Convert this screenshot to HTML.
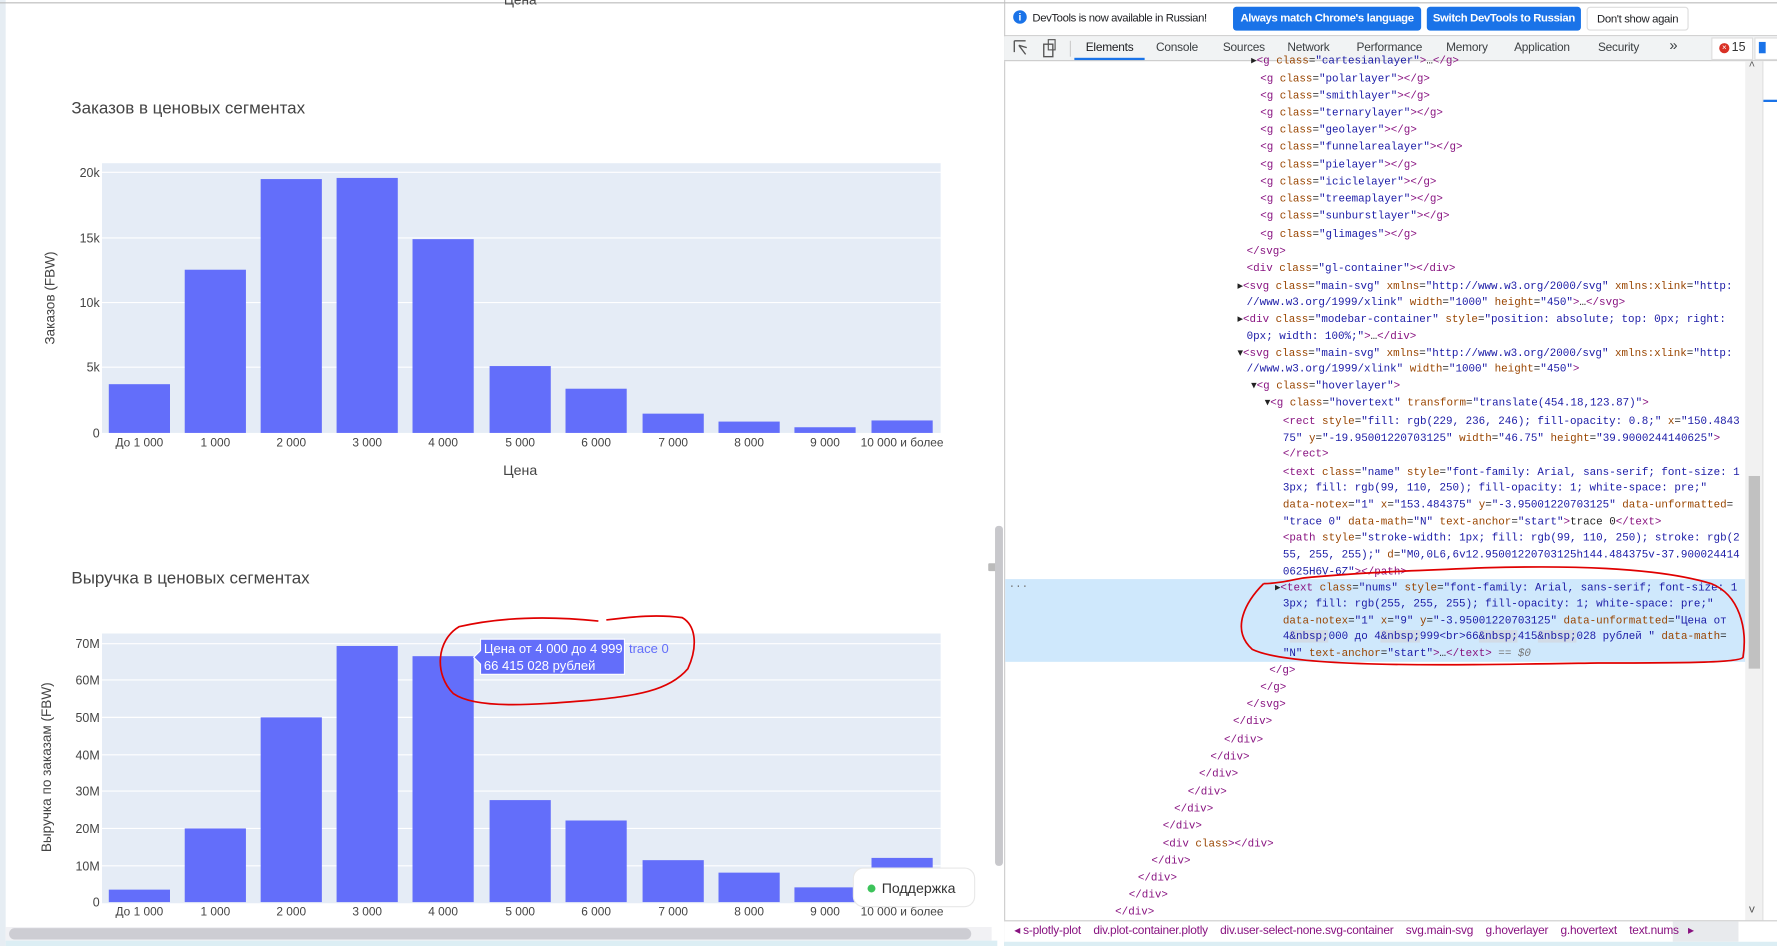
<!DOCTYPE html>
<html><head><meta charset="utf-8"><style>
html,body{margin:0;padding:0;width:1777px;height:946px;overflow:hidden;background:#fff}
#w{position:absolute;left:0;top:0;width:1568px;height:835px;transform:scale(1.13329);transform-origin:0 0;font-family:"Liberation Sans","Noto Sans CJK JP",sans-serif}
.ab{position:absolute}
.code{position:absolute;font-family:"Liberation Mono",monospace;font-size:9.6px;white-space:pre;line-height:12px;color:#222}
.t{color:#881280}.a{color:#994500}.v{color:#1a1aa6}
.tab{position:absolute;top:36px;font-size:10.5px;color:#3c4043;white-space:nowrap;letter-spacing:-0.2px}
.btn{position:absolute;top:6px;height:21px;line-height:21px;font-size:10px;border-radius:3px;white-space:nowrap;overflow:hidden;text-align:center;letter-spacing:-0.3px;box-sizing:border-box}
.hl{background:#d2dbe6}
</style></head><body><div id="w">
<div class="ab" style="left:0;top:0;width:5px;height:835px;background:#e6edf3"></div>
<div class="ab" style="left:0;top:2px;width:886px;height:1px;background:#bbb"></div>
<svg class="ab" style="left:0;top:0" width="886" height="835" font-family="Liberation Sans, Noto Sans CJK JP, sans-serif">
<text x="459" y="4" font-size="12" fill="#444" text-anchor="middle">Цена</text>
<text x="63" y="100" font-size="15" fill="#444">Заказов в ценовых сегментах</text>
<rect x="90" y="144" width="740" height="238" fill="#e5ecf6"/>
<g stroke="#fff" stroke-width="1"><line x1="90" x2="830" y1="152" y2="152"/><line x1="90" x2="830" y1="210" y2="210"/><line x1="90" x2="830" y1="267" y2="267"/><line x1="90" x2="830" y1="324" y2="324"/></g>
<g fill="#636efa">
<rect x="96" y="339" width="54" height="43"/><rect x="163" y="238" width="54" height="144"/><rect x="230" y="158" width="54" height="224"/><rect x="297" y="157" width="54" height="225"/><rect x="364" y="211" width="54" height="171"/><rect x="432" y="323" width="54" height="59"/><rect x="499" y="343" width="54" height="39"/><rect x="567" y="365" width="54" height="17"/><rect x="634" y="372" width="54" height="10"/><rect x="701" y="377" width="54" height="5"/><rect x="769" y="371" width="54" height="11"/></g>
<g font-size="11" fill="#444" text-anchor="end"><text x="88" y="156">20k</text><text x="88" y="214">15k</text><text x="88" y="271">10k</text><text x="88" y="328">5k</text><text x="88" y="386">0</text></g>
<g font-size="10.5" fill="#444" text-anchor="middle"><text x="123" y="394">До 1 000</text><text x="190" y="394">1 000</text><text x="257" y="394">2 000</text><text x="324" y="394">3 000</text><text x="391" y="394">4 000</text><text x="459" y="394">5 000</text><text x="526" y="394">6 000</text><text x="594" y="394">7 000</text><text x="661" y="394">8 000</text><text x="728" y="394">9 000</text><text x="796" y="394">10 000 и более</text></g>
<text x="459" y="419" font-size="12.5" fill="#444" text-anchor="middle">Цена</text>
<text transform="translate(48,263) rotate(-90)" font-size="12" fill="#444" text-anchor="middle">Заказов (FBW)</text>
<text x="63" y="515" font-size="15" fill="#444">Выручка в ценовых сегментах</text>
<rect x="90" y="559" width="740" height="238" fill="#e5ecf6"/>
<g stroke="#fff" stroke-width="1"><line x1="90" x2="830" y1="568" y2="568"/><line x1="90" x2="830" y1="600" y2="600"/><line x1="90" x2="830" y1="633" y2="633"/><line x1="90" x2="830" y1="666" y2="666"/><line x1="90" x2="830" y1="698" y2="698"/><line x1="90" x2="830" y1="731" y2="731"/><line x1="90" x2="830" y1="764" y2="764"/></g>
<g fill="#636efa">
<rect x="96" y="785" width="54" height="11"/><rect x="163" y="731" width="54" height="65"/><rect x="230" y="633" width="54" height="163"/><rect x="297" y="570" width="54" height="226"/><rect x="364" y="579" width="54" height="217"/><rect x="432" y="706" width="54" height="90"/><rect x="499" y="724" width="54" height="72"/><rect x="567" y="759" width="54" height="37"/><rect x="634" y="770" width="54" height="26"/><rect x="701" y="783" width="54" height="13"/><rect x="769" y="757" width="54" height="39"/></g>
<g font-size="11" fill="#444" text-anchor="end"><text x="88" y="572">70M</text><text x="88" y="604">60M</text><text x="88" y="637">50M</text><text x="88" y="670">40M</text><text x="88" y="702">30M</text><text x="88" y="735">20M</text><text x="88" y="768">10M</text><text x="88" y="800">0</text></g>
<g font-size="10.5" fill="#444" text-anchor="middle"><text x="123" y="808">До 1 000</text><text x="190" y="808">1 000</text><text x="257" y="808">2 000</text><text x="324" y="808">3 000</text><text x="391" y="808">4 000</text><text x="459" y="808">5 000</text><text x="526" y="808">6 000</text><text x="594" y="808">7 000</text><text x="661" y="808">8 000</text><text x="728" y="808">9 000</text><text x="796" y="808">10 000 и более</text></g>
<text transform="translate(45,677) rotate(-90)" font-size="12" fill="#444" text-anchor="middle">Выручка по заказам (FBW)</text>
<path d="M418,580 L424,574 V564 H551 V595 H424 V586 Z" fill="#636efa" stroke="#fff" stroke-width="1"/>
<text x="427" y="576" font-size="11.5" fill="#fff">Цена от 4 000 до 4 999</text>
<text x="427" y="591" font-size="11.5" fill="#fff">66 415 028 рублей</text>
<text x="555" y="576" font-size="11.5" fill="#636efa">trace 0</text>
<path d="M528,548 C480,543 440,545 405,553 C385,565 383,595 400,612 C420,626 470,622 520,618 C560,614 590,610 607,590 C616,570 614,552 602,545 C580,542 560,544 535,547" fill="none" stroke="#e00000" stroke-width="1.5"/>
<rect x="872" y="497" width="9" height="7" rx="1" fill="#bbb"/>
<rect x="878" y="464" width="7" height="300" rx="3" fill="#c8c8cc"/>
<rect x="5" y="818" width="870" height="12" fill="#f1f1f4"/>
<rect x="8" y="819" width="849" height="10" rx="5" fill="#cdcdd3"/>
<rect x="5" y="830" width="875" height="5" fill="#dceef4"/>
<rect x="753" y="766" width="107" height="34" rx="9" fill="#fff" stroke="#e8e8e8"/>
<circle cx="769" cy="784" r="3.5" fill="#3cc35a"/>
<text x="778" y="788" font-size="12.5" fill="#333">Поддержка</text>
</svg>

<div class="ab" style="left:886px;top:0;width:682px;height:835px;background:#fff;border-left:1px solid #ccc"></div>
<div class="ab" style="left:886px;top:2px;width:682px;height:1px;background:#bbb"></div>
<div class="ab" style="left:886px;top:31px;width:682px;height:1px;background:#ccc"></div>
<div class="ab" style="left:886px;top:32px;width:682px;height:21px;background:#f1f3f4;border-bottom:1px solid #ccc"></div>
<div class="ab" style="left:894px;top:9px;width:12px;height:12px;border-radius:6px;background:#1a73e8;color:#fff;font-size:9px;text-align:center;line-height:12px;font-weight:bold">i</div>
<div class="ab" style="left:911px;top:11px;font-size:10px;color:#202124;white-space:nowrap;letter-spacing:-0.35px">DevTools is now available in Russian!</div>
<div class="btn" style="left:1088px;width:166px;background:#1a73e8;color:#fff;font-weight:bold">Always match Chrome's language</div>
<div class="btn" style="left:1259px;width:136px;background:#1a73e8;color:#fff;font-weight:bold">Switch DevTools to Russian</div>
<div class="btn" style="left:1400px;width:90px;background:#fff;color:#202124;border:1px solid #ddd">Don't show again</div>
<svg class="ab" style="left:893px;top:34px" width="45" height="18"><path d="M2,2 H12 M2,2 V12 M6,6 L12,14 M6,6 L13,8" stroke="#555" fill="none" stroke-width="1.2"/><rect x="28" y="5" width="8" height="11" fill="none" stroke="#555" stroke-width="1.2"/><rect x="32" y="1" width="6" height="9" fill="none" stroke="#555"/></svg>
<div class="ab" style="left:944px;top:36px;width:1px;height:14px;background:#ccc"></div>
<div class="tab" style="left:958px;color:#202124">Elements</div>
<div class="ab" style="left:948px;top:51px;width:62px;height:2px;background:#1a73e8"></div>
<div class="tab" style="left:1020px">Console</div>
<div class="tab" style="left:1079px">Sources</div>
<div class="tab" style="left:1136px">Network</div>
<div class="tab" style="left:1197px">Performance</div>
<div class="tab" style="left:1276px">Memory</div>
<div class="tab" style="left:1336px">Application</div>
<div class="tab" style="left:1410px">Security</div>
<div class="tab" style="left:1473px;font-size:13px;top:32px">»</div>
<div class="ab" style="left:1510px;top:33px;width:35px;height:18px;border:1px solid #ddd;background:#fff"></div>
<div class="ab" style="left:1517px;top:38px;width:9px;height:9px;border-radius:5px;background:#d93025;color:#fff;font-size:7px;text-align:center;line-height:9px">×</div>
<div class="ab" style="left:1528px;top:36px;font-size:11px;color:#333">15</div>
<div class="ab" style="left:1548px;top:33px;width:20px;height:18px;border:1px solid #ddd;background:#fff"></div>
<div class="ab" style="left:1552px;top:37px;width:6px;height:10px;background:#1a73e8"></div>
<div class="ab" style="left:887px;top:511px;width:653px;height:73px;background:#cfe8fc"></div>
<div class="code" style="left:890px;top:512px;color:#777">···</div>
<div class="ab" style="left:1540px;top:54px;width:15px;height:759px;background:#f1f1f1"></div>
<div class="ab" style="left:1543px;top:420px;width:10px;height:170px;background:#c1c1c1"></div>
<div class="code" style="left:1543px;top:53px;color:#555">^</div>
<div class="code" style="left:1543px;top:797px;color:#555">v</div>
<div class="ab" style="left:1555px;top:54px;width:13px;height:759px;background:#fff;border-left:1px solid #ddd"></div>
<div class="ab" style="left:1556px;top:88px;width:12px;height:2px;background:#1a73e8"></div>

<div class="code" style="left:1104px;top:48px">▸<span class="t">&lt;g</span> <span class="a">class</span>=<span class="v">"cartesianlayer"</span><span class="t">&gt;</span>…<span class="t">&lt;/g&gt;</span></div>
<div class="code" style="left:1112px;top:64px"><span class="t">&lt;g</span> <span class="a">class</span>=<span class="v">"polarlayer"</span><span class="t">&gt;&lt;/g&gt;</span></div>
<div class="code" style="left:1112px;top:79px"><span class="t">&lt;g</span> <span class="a">class</span>=<span class="v">"smithlayer"</span><span class="t">&gt;&lt;/g&gt;</span></div>
<div class="code" style="left:1112px;top:94px"><span class="t">&lt;g</span> <span class="a">class</span>=<span class="v">"ternarylayer"</span><span class="t">&gt;&lt;/g&gt;</span></div>
<div class="code" style="left:1112px;top:109px"><span class="t">&lt;g</span> <span class="a">class</span>=<span class="v">"geolayer"</span><span class="t">&gt;&lt;/g&gt;</span></div>
<div class="code" style="left:1112px;top:124px"><span class="t">&lt;g</span> <span class="a">class</span>=<span class="v">"funnelarealayer"</span><span class="t">&gt;&lt;/g&gt;</span></div>
<div class="code" style="left:1112px;top:140px"><span class="t">&lt;g</span> <span class="a">class</span>=<span class="v">"pielayer"</span><span class="t">&gt;&lt;/g&gt;</span></div>
<div class="code" style="left:1112px;top:155px"><span class="t">&lt;g</span> <span class="a">class</span>=<span class="v">"iciclelayer"</span><span class="t">&gt;&lt;/g&gt;</span></div>
<div class="code" style="left:1112px;top:170px"><span class="t">&lt;g</span> <span class="a">class</span>=<span class="v">"treemaplayer"</span><span class="t">&gt;&lt;/g&gt;</span></div>
<div class="code" style="left:1112px;top:185px"><span class="t">&lt;g</span> <span class="a">class</span>=<span class="v">"sunburstlayer"</span><span class="t">&gt;&lt;/g&gt;</span></div>
<div class="code" style="left:1112px;top:201px"><span class="t">&lt;g</span> <span class="a">class</span>=<span class="v">"glimages"</span><span class="t">&gt;&lt;/g&gt;</span></div>
<div class="code" style="left:1100px;top:216px"><span class="t">&lt;/svg&gt;</span></div>
<div class="code" style="left:1100px;top:231px"><span class="t">&lt;div</span> <span class="a">class</span>=<span class="v">"gl-container"</span><span class="t">&gt;&lt;/div&gt;</span></div>
<div class="code" style="left:1092px;top:247px">▸<span class="t">&lt;svg</span> <span class="a">class</span>=<span class="v">"main-svg"</span> <span class="a">xmlns</span>=<span class="v">"http://www.w3.org/2000/svg"</span> <span class="a">xmlns:xlink</span>=<span class="v">"http:</span></div>
<div class="code" style="left:1100px;top:261px"><span class="v">//www.w3.org/1999/xlink"</span> <span class="a">width</span>=<span class="v">"1000"</span> <span class="a">height</span>=<span class="v">"450"</span><span class="t">&gt;</span>…<span class="t">&lt;/svg&gt;</span></div>
<div class="code" style="left:1092px;top:276px">▸<span class="t">&lt;div</span> <span class="a">class</span>=<span class="v">"modebar-container"</span> <span class="a">style</span>=<span class="v">"position: absolute; top: 0px; right:</span></div>
<div class="code" style="left:1100px;top:291px"><span class="v">0px; width: 100%;"</span><span class="t">&gt;</span>…<span class="t">&lt;/div&gt;</span></div>
<div class="code" style="left:1092px;top:306px">▾<span class="t">&lt;svg</span> <span class="a">class</span>=<span class="v">"main-svg"</span> <span class="a">xmlns</span>=<span class="v">"http://www.w3.org/2000/svg"</span> <span class="a">xmlns:xlink</span>=<span class="v">"http:</span></div>
<div class="code" style="left:1100px;top:320px"><span class="v">//www.w3.org/1999/xlink"</span> <span class="a">width</span>=<span class="v">"1000"</span> <span class="a">height</span>=<span class="v">"450"</span><span class="t">&gt;</span></div>
<div class="code" style="left:1104px;top:335px">▾<span class="t">&lt;g</span> <span class="a">class</span>=<span class="v">"hoverlayer"</span><span class="t">&gt;</span></div>
<div class="code" style="left:1116px;top:350px">▾<span class="t">&lt;g</span> <span class="a">class</span>=<span class="v">"hovertext"</span> <span class="a">transform</span>=<span class="v">"translate(454.18,123.87)"</span><span class="t">&gt;</span></div>
<div class="code" style="left:1132px;top:366px"><span class="t">&lt;rect</span> <span class="a">style</span>=<span class="v">"fill: rgb(229, 236, 246); fill-opacity: 0.8;"</span> <span class="a">x</span>=<span class="v">"150.4843</span></div>
<div class="code" style="left:1132px;top:381px"><span class="v">75"</span> <span class="a">y</span>=<span class="v">"-19.95001220703125"</span> <span class="a">width</span>=<span class="v">"46.75"</span> <span class="a">height</span>=<span class="v">"39.9000244140625"</span><span class="t">&gt;</span></div>
<div class="code" style="left:1132px;top:395px"><span class="t">&lt;/rect&gt;</span></div>
<div class="code" style="left:1132px;top:411px"><span class="t">&lt;text</span> <span class="a">class</span>=<span class="v">"name"</span> <span class="a">style</span>=<span class="v">"font-family: Arial, sans-serif; font-size: 1</span></div>
<div class="code" style="left:1132px;top:425px"><span class="v">3px; fill: rgb(99, 110, 250); fill-opacity: 1; white-space: pre;"</span></div>
<div class="code" style="left:1132px;top:440px"><span class="a">data-notex</span>=<span class="v">"1"</span> <span class="a">x</span>=<span class="v">"153.484375"</span> <span class="a">y</span>=<span class="v">"-3.95001220703125"</span> <span class="a">data-unformatted</span>=</div>
<div class="code" style="left:1132px;top:455px"><span class="v">"trace 0"</span> <span class="a">data-math</span>=<span class="v">"N"</span> <span class="a">text-anchor</span>=<span class="v">"start"</span><span class="t">&gt;</span>trace 0<span class="t">&lt;/text&gt;</span></div>
<div class="code" style="left:1132px;top:469px"><span class="t">&lt;path</span> <span class="a">style</span>=<span class="v">"stroke-width: 1px; fill: rgb(99, 110, 250); stroke: rgb(2</span></div>
<div class="code" style="left:1132px;top:484px"><span class="v">55, 255, 255);"</span> <span class="a">d</span>=<span class="v">"M0,0L6,6v12.95001220703125h144.484375v-37.900024414</span></div>
<div class="code" style="left:1132px;top:499px"><span class="v">0625H6V-6Z"</span><span class="t">&gt;&lt;/path&gt;</span></div>
<div class="code" style="left:1125px;top:513px">▸<span class="t">&lt;text</span> <span class="a">class</span>=<span class="v">"nums"</span> <span class="a">style</span>=<span class="v">"font-family: Arial, sans-serif; font-size: 1</span></div>
<div class="code" style="left:1132px;top:527px"><span class="v">3px; fill: rgb(255, 255, 255); fill-opacity: 1; white-space: pre;"</span></div>
<div class="code" style="left:1132px;top:542px"><span class="a">data-notex</span>=<span class="v">"1"</span> <span class="a">x</span>=<span class="v">"9"</span> <span class="a">y</span>=<span class="v">"-3.95001220703125"</span> <span class="a">data-unformatted</span>=<span class="v">"Цена от</span></div>
<div class="code" style="left:1132px;top:556px"><span class="v">4<span class="hl">&amp;nbsp;</span>000 до 4<span class="hl">&amp;nbsp;</span>999&lt;br&gt;66<span class="hl">&amp;nbsp;</span>415<span class="hl">&amp;nbsp;</span>028 рублей "</span> <span class="a">data-math</span>=</div>
<div class="code" style="left:1132px;top:571px"><span class="v">"N"</span> <span class="a">text-anchor</span>=<span class="v">"start"</span><span class="t">&gt;</span>…<span class="t">&lt;/text&gt;</span> <span style="color:#777">== <i>$0</i></span></div>
<div class="code" style="left:1120px;top:586px"><span class="t">&lt;/g&gt;</span></div>
<div class="code" style="left:1112px;top:601px"><span class="t">&lt;/g&gt;</span></div>
<div class="code" style="left:1100px;top:616px"><span class="t">&lt;/svg&gt;</span></div>
<div class="code" style="left:1088px;top:631px"><span class="t">&lt;/div&gt;</span></div>
<div class="code" style="left:1080px;top:647px"><span class="t">&lt;/div&gt;</span></div>
<div class="code" style="left:1068px;top:662px"><span class="t">&lt;/div&gt;</span></div>
<div class="code" style="left:1058px;top:677px"><span class="t">&lt;/div&gt;</span></div>
<div class="code" style="left:1048px;top:693px"><span class="t">&lt;/div&gt;</span></div>
<div class="code" style="left:1036px;top:708px"><span class="t">&lt;/div&gt;</span></div>
<div class="code" style="left:1026px;top:723px"><span class="t">&lt;/div&gt;</span></div>
<div class="code" style="left:1026px;top:739px"><span class="t">&lt;div</span> <span class="a">class</span><span class="t">&gt;&lt;/div&gt;</span></div>
<div class="code" style="left:1016px;top:754px"><span class="t">&lt;/div&gt;</span></div>
<div class="code" style="left:1004px;top:769px"><span class="t">&lt;/div&gt;</span></div>
<div class="code" style="left:996px;top:784px"><span class="t">&lt;/div&gt;</span></div>
<div class="code" style="left:984px;top:799px"><span class="t">&lt;/div&gt;</span></div>
<svg class="ab" style="left:1080px;top:495px" width="488" height="105"><path d="M35,20 C20,35 5,60 25,78 C60,95 200,92 330,90 C400,90 455,90 458,85 C462,60 455,30 430,20 C380,5 300,4 230,6 C180,8 120,10 70,15 C55,18 45,20 35,20" fill="none" stroke="#e00000" stroke-width="1.5"/></svg>
<div class="ab" style="left:886px;top:812px;width:682px;height:19px;background:#fff;border-top:1px solid #ccc"></div>
<div class="ab" style="left:1476px;top:813px;width:58px;height:18px;background:#e8eaed"></div>
<div class="ab" style="left:895px;top:815px;font-size:10.5px;color:#881280;white-space:pre;letter-spacing:-0.2px">◂ s-plotly-plot    div.plot-container.plotly    div.user-select-none.svg-container    svg.main-svg    g.hoverlayer    g.hovertext    text.nums   ▸</div>
<div class="ab" style="left:886px;top:831px;width:682px;height:4px;background:#dceef4"></div>
</div></body></html>
